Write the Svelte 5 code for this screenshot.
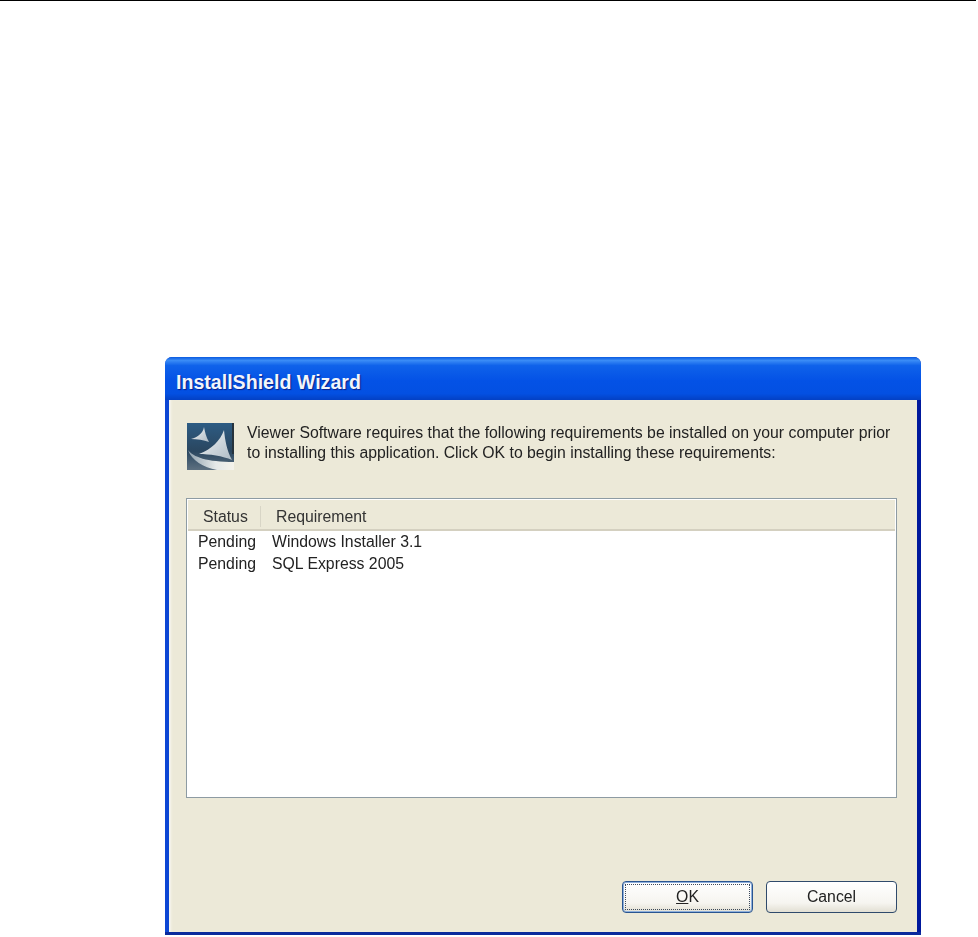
<script lang="ts">
  const requirements = [
    { status: 'Pending', name: 'Windows Installer 3.1' },
    { status: 'Pending', name: 'SQL Express 2005' },
  ];
</script>

<div class="page">
  <hr class="rule" />
  <div class="window">
    <div class="titlebar">InstallShield Wizard</div>
    <div class="body">
      <div class="intro">
        <svg class="logo" width="48" height="48" viewBox="0 0 48 48" aria-hidden="true">
          <defs>
            <linearGradient id="sky" x1="0" y1="0" x2="0" y2="1">
              <stop offset="0" stop-color="#2d5c84" />
              <stop offset="0.6" stop-color="#2a465f" />
              <stop offset="1" stop-color="#5d7080" />
            </linearGradient>
            <linearGradient id="sail" x1="0" y1="0" x2="1" y2="1">
              <stop offset="0" stop-color="#f4f6f6" />
              <stop offset="1" stop-color="#aebbc5" />
            </linearGradient>
            <linearGradient id="sweep" x1="0" y1="0" x2="1" y2="0">
              <stop offset="0" stop-color="#8fa0ad" />
              <stop offset="0.6" stop-color="#e4e8e8" />
              <stop offset="1" stop-color="#f5f3ea" />
            </linearGradient>
          </defs>
          <rect width="47" height="47" fill="url(#sky)" />
          <rect x="45" y="0" width="2" height="31" fill="#26333d" />
          <path d="M17 4 C16 10 11 14 4 16 C10 16 17 17 22 19 C19 14 18 9 17 4 Z" fill="url(#sail)" />
          <path d="M37 7 C33 18 25 26 12 31 C22 31 36 33 45 37 C40 28 38 17 37 7 Z" fill="url(#sail)" />
          <path d="M1 27 C6 34 20 39 47 39 L47 47 L30 47 C16 44 5 38 1 27 Z" fill="url(#sweep)" />
        </svg>
        <p class="message">Viewer Software requires that the following requirements be installed on your computer prior<br />to installing this application. Click OK to begin installing these requirements:</p>
      </div>

      <div class="list">
        <div class="list-head">
          <span class="col-status">Status</span>
          <span class="col-name">Requirement</span>
        </div>
        <div class="list-rows">
          {#each requirements as req}
            <div class="row">
              <span class="cell-status">{req.status}</span>
              <span>{req.name}</span>
            </div>
          {/each}
        </div>
      </div>

      <div class="actions">
        <button class="btn default"><span class="focus"><u>O</u>K</span></button>
        <button class="btn"><span class="focus plain">Cancel</span></button>
      </div>
    </div>
  </div>
</div>

<style>
  :global(body) {
    margin: 0;
    background: #ffffff;
  }

  .page {
    width: 978px;
    height: 937px;
    overflow: hidden;
    font-family: "Liberation Sans", Arial, sans-serif;
  }

  .rule {
    height: 1px;
    margin: 0 2px 0 0;
    border: 0;
    background: #000000;
  }

  .window {
    width: 756px;
    height: 578px;
    box-sizing: border-box;
    margin: 356px 0 0 165px;
    display: flex;
    flex-direction: column;
    border-bottom: 3px solid #0a2a9c;
    border-radius: 7px 7px 0 0;
    overflow: hidden;
    background: linear-gradient(90deg, #0c46d4 0%, #0c46d4 50%, #00189c 100%);
    filter: blur(0.5px);
  }

  .titlebar {
    height: 43px;
    flex-shrink: 0;
    box-sizing: border-box;
    padding: 15px 0 0 11px;
    font-size: 19.6px;
    line-height: 20px;
    font-weight: 700;
    color: #f2f5fb;
    text-shadow: 1px 1px 1px #0a1f8a;
    background: linear-gradient(180deg, #0a5ae0 0%, #3a8cf6 8%, #0f62ea 20%, #0452e6 55%, #0350e2 85%, #0340c4 100%);
  }

  .body {
    flex: 1;
    display: flex;
    flex-direction: column;
    margin: 0 4px;
    box-sizing: border-box;
    padding: 20px 20px 19px 17px;
    background: #ece9d8;
    box-shadow: inset 3px 0 2px -1px #f6f5ee;
  }

  .intro {
    display: flex;
    align-items: flex-start;
    gap: 12px;
    height: 78px;
    flex-shrink: 0;
  }

  .logo {
    flex-shrink: 0;
    margin: 3px 0 0 1px;
  }

  .message {
    margin: 3px 0 0;
    font-size: 15.8px;
    line-height: 20px;
    color: #222222;
    white-space: nowrap;
  }

  .list {
    height: 300px;
    box-sizing: border-box;
    flex-shrink: 0;
    display: flex;
    flex-direction: column;
    border: 1px solid #8d9ba3;
    background: #ffffff;
  }

  .list-head {
    height: 31px;
    flex-shrink: 0;
    box-sizing: border-box;
    margin: 1px 1px 0;
    padding-top: 3px;
    display: flex;
    align-items: center;
    font-size: 15.8px;
    line-height: 21px;
    color: #333333;
    background: #ece9d8;
    border-bottom: 2px solid #d4d0c0;
  }

  .col-status {
    width: 73px;
    box-sizing: border-box;
    padding-left: 15px;
    border-right: 1px solid #d8d5c6;
  }

  .col-name {
    padding-left: 15px;
  }

  .list-rows {
    padding: 0 0 0 11px;
    font-size: 15.8px;
    line-height: 22px;
    color: #222222;
  }

  .row {
    display: flex;
  }

  .cell-status {
    width: 74px;
    flex-shrink: 0;
  }

  .actions {
    margin-top: auto;
    display: flex;
    justify-content: flex-end;
    gap: 13px;
  }

  .btn {
    width: 131px;
    height: 32px;
    padding: 2px;
    box-sizing: border-box;
    border: 1px solid #2f4a6b;
    border-radius: 4px;
    font-family: inherit;
    font-size: 15.8px;
    color: #222222;
    background: linear-gradient(180deg, #ffffff 0%, #f6f5f0 70%, #e2dfd3 100%);
  }

  .btn.default {
    border-color: #2a5590;
    box-shadow: inset 0 0 0 1px #8fb0dc;
  }

  .focus {
    display: flex;
    align-items: center;
    justify-content: center;
    height: 100%;
    box-sizing: border-box;
    border: 1px dotted #3d4a5c;
  }

  .focus.plain {
    border-color: transparent;
  }
</style>
